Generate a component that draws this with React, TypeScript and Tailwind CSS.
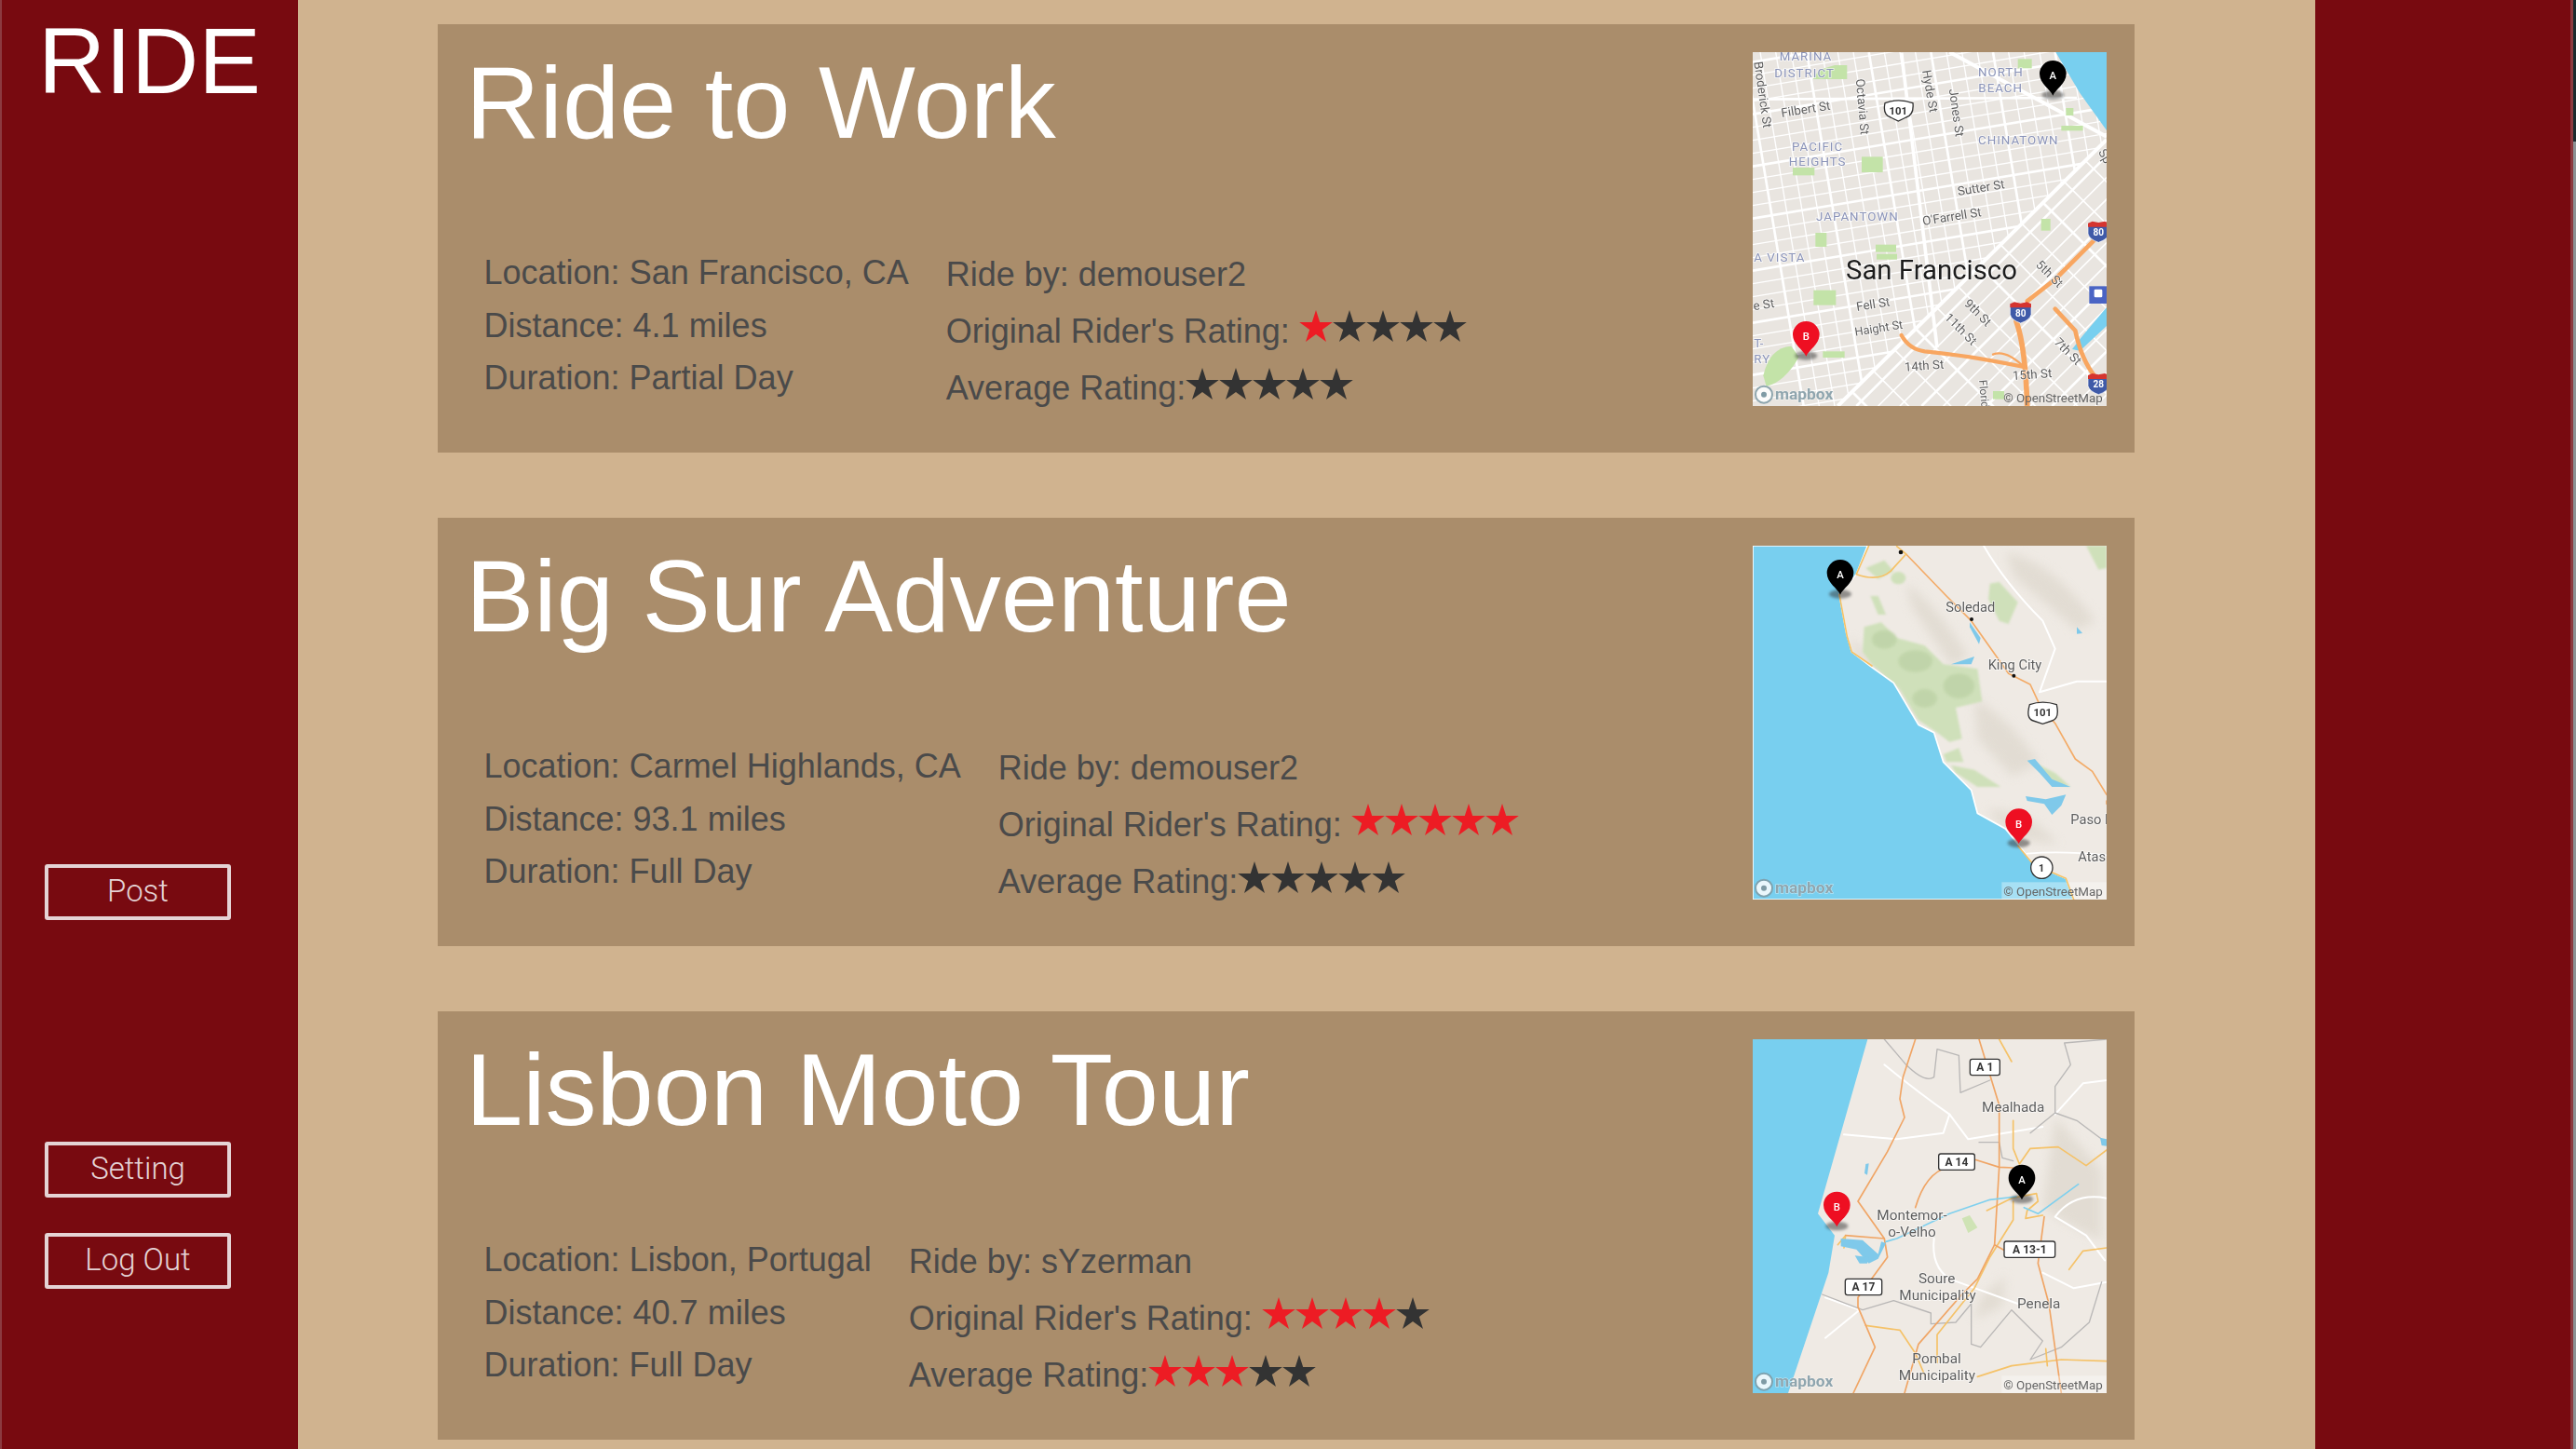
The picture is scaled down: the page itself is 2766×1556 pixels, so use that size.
import React from "react";

const rides = [
  { title: "Ride to Work", location: "San Francisco, CA", distance: "4.1 miles", duration: "Partial Day", by: "demouser2", original: 1, average: 0, map: "sf" },
  { title: "Big Sur Adventure", location: "Carmel Highlands, CA", distance: "93.1 miles", duration: "Full Day", by: "demouser2", original: 5, average: 0, map: "sur" },
  { title: "Lisbon Moto Tour", location: "Lisbon, Portugal", distance: "40.7 miles", duration: "Full Day", by: "sYzerman", original: 4, average: 3, map: "lisbon" },
];

function Stars({ red }: { red: number }) {
  return (
    <span className="flex">
      {[0, 1, 2, 3, 4].map((i) => (
        <svg key={i} viewBox="0 0 36 34" className="h-[34px] w-[36px]">
          <polygon
            points="18,0 22.2,13 35.8,13 24.8,21 29,34 18,26 7,34 11.2,21 0.2,13 13.8,13"
            fill={i < red ? "#ED1C24" : "#333333"}
          />
        </svg>
      ))}
    </span>
  );
}

function Pin({ x, y, label, fill }: { x: number; y: number; label: string; fill: string }) {
  return (
    <g>
      <ellipse cx={x} cy={y - 2} rx="36" ry="14" fill="#333" opacity="0.5" className="blur-[5px]" />
      <path
        d={`M${x} ${y}C${x - 8} ${y - 20} ${x - 43} ${y - 38} ${x - 43} ${y - 70}A43 43 0 1 1 ${x + 43} ${y - 70}C${x + 43} ${y - 38} ${x + 8} ${y - 20} ${x} ${y}Z`}
        fill={fill}
      />
      <text x={x} y={y - 52} textAnchor="middle" fontSize="34" fontWeight="500" fill="#fff">{label}</text>
    </g>
  );
}

function Label({ x, y, size = 40, rotate = 0, fill = "#5d5d5d", spacing = 0, weight = 400, children }: {
  x: number; y: number; size?: number; rotate?: number; fill?: string; spacing?: number; weight?: number; children: string;
}) {
  return (
    <text
      x={x}
      y={y}
      fontSize={size}
      fill={fill}
      fontWeight={weight}
      letterSpacing={spacing}
      stroke="#ffffff"
      strokeOpacity="0.7"
      strokeWidth="5"
      paintOrder="stroke"
      transform={rotate ? `rotate(${rotate} ${x} ${y})` : undefined}
    >
      {children}
    </text>
  );
}

function Shield({ x, y, label, w = 96 }: { x: number; y: number; label: string; w?: number }) {
  return (
    <g>
      <rect x={x - w / 2} y={y - 26} width={w} height={52} rx="7" fill="#fff" stroke="#333" strokeWidth="4" />
      <text x={x} y={y + 13} textAnchor="middle" fontSize="36" fontWeight="700" fill="#333">{label}</text>
    </g>
  );
}

function Interstate({ x, y, label }: { x: number; y: number; label: string }) {
  return (
    <g>
      <path d={`M${x - 34} ${y - 26}H${x + 34}V${y + 8}Q${x + 30} ${y + 26} ${x} ${y + 36}Q${x - 30} ${y + 26} ${x - 34} ${y + 8}Z`} fill="#3f5aa8" stroke="#fff" strokeWidth="2" />
      <path d={`M${x - 34} ${y - 14}V${y - 26}L${x - 20} ${y - 32}L${x} ${y - 28}L${x + 20} ${y - 32}L${x + 34} ${y - 26}V${y - 14}Z`} fill="#d5342f" />
      <text x={x} y={y + 14} textAnchor="middle" fontSize="30" fontWeight="700" fill="#fff">{label}</text>
    </g>
  );
}

function Credits({ box }: { box?: boolean }) {
  return (
    <g>
      {box && <rect x="868" y="1132" width="338" height="56" fill="#ffffff" opacity="0.35" />}
      <circle cx="102" cy="1151" r="27" fill="#ffffff" opacity="0.85" stroke="#7f9ba5" strokeWidth="6" />
      <circle cx="102" cy="1151" r="9" fill="#7f9ba5" />
      <text x="138" y="1166" fontSize="52" fontWeight="700" fill="#8fa5ae" stroke="#ffffff" strokeOpacity="0.6" strokeWidth="3" paintOrder="stroke">mapbox</text>
      <text x="874" y="1176" fontSize="40" fill="#666">© OpenStreetMap</text>
    </g>
  );
}

function SfMap() {
  const across = Array.from({ length: 30 }, (_, i) => 20 + i * 42);
  const down = Array.from({ length: 26 }, (_, i) => 40 + i * 50);
  const northeast = Array.from({ length: 20 }, (_, i) => 400 + i * 70);
  const southeast = Array.from({ length: 14 }, (_, i) => i * 68);
  return (
    <>
      <defs>
        <clipPath id="sf-north"><polygon points="66,48 1206,48 1206,330 340,1188 66,1188" /></clipPath>
        <clipPath id="sf-south"><polygon points="1206,330 1206,1188 340,1188" /></clipPath>
      </defs>
      <rect x="66" y="48" width="1140" height="1140" fill="#e9e5e0" />
      <g clipPath="url(#sf-north)" stroke="#ffffff">
        {across.map((y, i) => <line key={y} x1="66" y1={y + 60} x2="1206" y2={y - 130} strokeWidth={i % 4 === 0 ? 8 : 4} />)}
        {down.map((x, i) => <line key={x} x1={x} y1="48" x2={x + 190} y2="1188" strokeWidth={i % 4 === 0 ? 8 : 4} />)}
      </g>
      <g clipPath="url(#sf-south)" stroke="#ffffff">
        {northeast.map((x, i) => <line key={x} x1={x} y1="1188" x2={x + 800} y2={388} strokeWidth={i % 3 === 0 ? 8 : 5} />)}
        {southeast.map((t, i) => <line key={t} x1={1206 - t} y1={330 + t} x2={1206 - t + 900} y2={330 + t + 900} strokeWidth={i % 3 === 0 ? 8 : 5} />)}
      </g>
      <g stroke="#ffffff" fill="none">
        <path d="M1206 330L340 1188" strokeWidth="12" />
        <path d="M545 50L660 1000" strokeWidth="11" />
        <path d="M66 200L1110 195" strokeWidth="8" />
        <path d="M700 48L1206 320" strokeWidth="12" />
      </g>
      <g fill="#c3e3a8">
        <path d="M330 90h40v45h-110l20-30z" />
        <rect x="417" y="385" width="68" height="50" />
        <path d="M195 420h70v25h-70z" />
        <rect x="268" y="630" width="36" height="45" />
        <rect x="262" y="815" width="72" height="48" />
        <rect x="462" y="668" width="66" height="24" />
        <rect x="465" y="698" width="66" height="18" />
        <rect x="292" y="1012" width="70" height="20" />
        <path d="M100 1090Q120 1000 190 995L215 1030Q170 1110 110 1125Z" />
        <rect x="995" y="585" width="30" height="38" />
        <rect x="1075" y="228" width="24" height="24" />
        <rect x="1060" y="285" width="70" height="16" />
        <rect x="920" y="70" width="45" height="30" />
        <rect x="840" y="1140" width="36" height="26" />
      </g>
      <path d="M1042 48H1206V300L1120 180Z" fill="#78cfef" />
      <path d="M1206 870L1130 960L1095 1005L1120 1010L1206 930Z" fill="#78cfef" />
      <g fill="none" stroke="#f8a660" strokeLinecap="round" strokeLinejoin="round">
        <path d="M545 960Q570 1005 620 1012Q760 1025 940 1062" strokeWidth="13" />
        <path d="M840 1022Q880 1005 940 1062" strokeWidth="7" />
        <path d="M1170 650L1040 780L950 850" strokeWidth="14" />
        <path d="M915 915Q945 1000 950 1188" strokeWidth="17" />
        <path d="M1040 875L1105 945Q1125 1040 1170 1095" strokeWidth="14" />
      </g>
      <rect x="1150" y="802" width="56" height="56" fill="#4a64c4" />
      <rect x="1166" y="812" width="26" height="26" rx="4" fill="#fff" />
      <Label x={136} y={128} fill="#8a93b8" spacing={3}>DISTRICT</Label>
      <Label x={152} y={76} fill="#8a93b8" spacing={3}>MARINA</Label>
      <Label x={792} y={127} fill="#8a93b8" spacing={3}>NORTH</Label>
      <Label x={793} y={177} fill="#8a93b8" spacing={3}>BEACH</Label>
      <Label x={192} y={365} fill="#8a93b8" spacing={3}>PACIFIC</Label>
      <Label x={182} y={415} fill="#8a93b8" spacing={3}>HEIGHTS</Label>
      <Label x={792} y={345} fill="#8a93b8" spacing={3}>CHINATOWN</Label>
      <Label x={270} y={590} fill="#8a93b8" spacing={3}>JAPANTOWN</Label>
      <Label x={70} y={722} fill="#8a93b8" spacing={3}>A VISTA</Label>
      <Label x={70} y={1000} fill="#8a93b8">T-</Label>
      <Label x={70} y={1050} fill="#8a93b8" spacing={3}>RY</Label>
      <Label x={160} y={258} rotate={-9}>Filbert St</Label>
      <Label x={398} y={135} rotate={85}>Octavia St</Label>
      <Label x={612} y={108} rotate={80}>Hyde St</Label>
      <Label x={698} y={168} rotate={82}>Jones St</Label>
      <Label x={70} y={80} rotate={82}>Broderick St</Label>
      <Label x={728} y={510} rotate={-9}>Sutter St</Label>
      <Label x={615} y={606} rotate={-9}>O'Farrell St</Label>
      <Label x={402} y={882} rotate={-9}>Fell St</Label>
      <Label x={397} y={962} rotate={-9} size={38}>Haight St</Label>
      <Label x={70} y={880} rotate={-9}>e St</Label>
      <Label x={556} y={1076} rotate={-4}>14th St</Label>
      <Label x={904} y={1104} rotate={-4}>15th St</Label>
      <Label x={976} y={735} rotate={45}>5th St</Label>
      <Label x={745} y={860} rotate={45}>9th St</Label>
      <Label x={682} y={905} rotate={45}>11th St</Label>
      <Label x={1035} y={985} rotate={45}>7th St</Label>
      <Label x={795} y={1105} rotate={85} size={36}>Florida</Label>
      <Label x={1178} y={370} rotate={60}>Sp</Label>
      <Label x={366} y={780} size={88} fill="#1c1c1c">San Francisco</Label>
      <g>
        <path d="M492 212Q535 195 582 212Q586 250 560 258L535 270L510 258Q484 250 492 212Z" fill="#fff" stroke="#333" strokeWidth="4" />
        <text x="535" y="249" textAnchor="middle" fontSize="34" fontWeight="700" fill="#333">101</text>
      </g>
      <Interstate x={1180} y={625} label="80" />
      <Interstate x={929} y={885} label="80" />
      <Interstate x={1180} y={1115} label="28" />
      <Pin x={1033} y={188} label="A" fill="#000000" />
      <Pin x={238} y={1028} label="B" fill="#ee0f22" />
      <Credits />
    </>
  );
}

function SurMap() {
  return (
    <>
      <rect x="66" y="48" width="1140" height="1140" fill="#efeae4" />
      <g fill="#dfd9cf" className="blur-[16px]" opacity="0.8">
        <path d="M560 170Q640 220 760 400L710 440L580 250Z" />
        <path d="M880 70Q1020 90 1170 290L1110 320L910 150Z" />
        <path d="M820 900Q950 890 1050 1010L900 990Z" />
        <path d="M780 540Q900 610 990 750L900 790L790 670Z" />
        <path d="M380 340L460 420L530 500L600 600L580 620L450 460L390 390Z" />
      </g>
      <g fill="#cfe0ba" className="blur-[3px]">
        <path d="M425 310L480 295L530 345L620 370L680 430L790 445L805 550L720 570L730 620L740 670L700 680L660 650L600 610L540 510L450 430L420 390Z" />
        <path d="M830 170L860 165L920 230L890 300L860 290L825 220Z" />
        <path d="M430 120L490 95L520 130L470 155Z" />
        <ellipse cx="535" cy="152" rx="24" ry="20" />
        <path d="M445 210L470 210L495 270L470 270Z" />
        <path d="M680 720L730 700L745 745L690 745Z" />
        <path d="M705 755L780 770L865 825L790 825L720 780Z" />
        <path d="M1140 48H1206V120L1180 125Z" />
        <path d="M960 740L1040 780L1090 825L1030 815Z" />
      </g>
      <g fill="#b5cc9d" opacity="0.55" className="blur-[5px]">
        <ellipse cx="490" cy="350" rx="40" ry="30" />
        <ellipse cx="590" cy="420" rx="55" ry="35" />
        <ellipse cx="730" cy="500" rx="50" ry="40" />
        <ellipse cx="620" cy="540" rx="40" ry="30" />
      </g>
      <path d="M66 48H436L400 140L345 205L368 330L385 390L450 440L520 490L600 625L650 650L680 745L770 835L790 910L880 960L925 1015L970 1075L1075 1120L1100 1188H66Z" fill="#78cfef" stroke="#ffffff" strokeWidth="5" />
      <rect x="868" y="1132" width="338" height="56" fill="#ffffff" opacity="0.35" />
      <g fill="none" strokeLinecap="round" strokeLinejoin="round">
        <path d="M810 48Q880 170 1000 290L1040 380L990 520L1110 485L1206 485" stroke="#ffffff" strokeWidth="6" />
        <path d="M560 75L690 210L770 290L890 460L960 495L990 560L1040 620L1105 735L1160 775L1206 850" stroke="#f3ab67" strokeWidth="5" />
        <path d="M440 48L400 140Q470 165 510 130L560 75L530 50" stroke="#f5c268" strokeWidth="5" />
        <path d="M345 205L370 340L385 390L450 435" stroke="#f5c268" strokeWidth="5" />
        <path d="M920 1015L970 1075L1075 1120L1100 1188" stroke="#f5c268" strokeWidth="5" />
        <path d="M950 1040Q1060 1030 1206 1045" stroke="#ffffff" strokeWidth="5" />
        <path d="M1206 870V880" stroke="#f3ab67" strokeWidth="5" />
      </g>
      <g fill="#7fc9ea">
        <path d="M950 740L975 735L1030 800L1090 825L1030 825L990 780Z" />
        <path d="M945 855L1010 865L1075 850L1060 885L1030 915L1005 880L950 870Z" />
        <path d="M765 295L800 345L795 365L765 310Z" />
        <path d="M1110 310L1128 330L1110 332Z" />
        <path d="M705 430L780 405L770 430Z" />
      </g>
      <g fill="#111">
        <circle cx="543" cy="69" r="7" />
        <circle cx="771" cy="285" r="6" />
        <circle cx="907" cy="467" r="6" />
      </g>
      <Label x={688} y={262} size={44}>Soledad</Label>
      <Label x={824} y={446} size={44}>King City</Label>
      <Label x={1090} y={946} size={44}>Paso R</Label>
      <Label x={1114} y={1064} size={44}>Atas</Label>
      <g>
        <path d="M958 560Q1000 545 1045 560Q1055 605 1030 612L1000 622L970 612Q945 605 958 560Z" fill="#fff" stroke="#333" strokeWidth="4" />
        <text x="1000" y="598" textAnchor="middle" fontSize="34" fontWeight="700" fill="#333">101</text>
      </g>
      <circle cx="997" cy="1085" r="35" fill="#fff" stroke="#333" strokeWidth="4" />
      <text x="996" y="1097" textAnchor="middle" fontSize="32" fontWeight="700" fill="#333">1</text>
      <Pin x={348} y={206} label="A" fill="#000000" />
      <Pin x={923} y={1008} label="B" fill="#ee0f22" />
      <Credits />
    </>
  );
}

function LisbonMap() {
  return (
    <>
      <rect x="66" y="48" width="1140" height="1140" fill="#efeae4" />
      <g fill="#dfd9cf" className="blur-[16px]" opacity="0.8">
        <path d="M1040 300Q1130 400 1190 470V700L1060 630L1000 590Z" />
        <path d="M800 880L880 810L870 910L780 950Z" />
      </g>
      <path d="M740 625L765 615L790 655L760 672Z" fill="#cfe3b5" />
      <path d="M66 48H436L276 610L330 680L310 800L180 1188H66Z" fill="#78cfef" />
      <g fill="none" strokeLinecap="round" strokeLinejoin="round">
        <g stroke="#ffffff" strokeWidth="6">
          <path d="M490 130Q600 220 700 290L760 370L1000 330" />
          <path d="M700 290L680 350L530 370L360 355" />
          <path d="M1206 560Q1100 540 1040 620L1140 680L1200 760" />
          <path d="M650 690Q640 780 700 820L920 900" />
          <path d="M300 880L410 920L300 1010" />
          <path d="M1040 290L1130 190L1206 180" />
          <path d="M1000 800L1100 850L1206 830" />
        </g>
        <g stroke="#b9b7b6" strokeWidth="4">
          <path d="M490 48L560 130Q620 190 650 170L660 80L730 100L735 220L830 180" />
          <path d="M795 380H860L870 430L905 440" />
          <path d="M960 350L1040 285L1110 310L1190 370" />
          <path d="M1040 285L1040 200L1090 130L1070 60L1206 48" />
          <path d="M290 870L420 920L520 890L640 930L640 965L720 960L770 900L770 1030L800 1040L900 920L1000 1020L960 1080L1060 1040L1150 960L1190 830" />
        </g>
        <g stroke="#f5c268" strokeWidth="5">
          <path d="M860 48L900 120" />
          <path d="M905 310V400L925 450L960 400L1050 395L1140 455L1206 405" />
          <path d="M905 570L905 630L830 750L780 850L660 1000V1090" />
          <path d="M820 600L900 560L980 545L985 570L950 600L945 625L1000 615" />
          <path d="M340 710L365 680L360 720" />
          <path d="M430 970L540 985L590 1060L620 1130" />
          <path d="M1085 790L1130 730L1206 720" />
          <path d="M790 1135L900 1100L1060 1080L1206 1085" />
          <path d="M1010 1045L1015 1100" />
        </g>
        <g stroke="#f0a565" strokeWidth="5">
          <path d="M590 48L550 170L540 240L555 300L500 410L405 570L490 690L500 750L405 880V910L460 1040L390 1188" />
          <path d="M365 680L490 690" />
          <path d="M590 590Q620 490 680 465" />
          <path d="M780 435L860 460L905 462" />
          <path d="M795 48L860 260L860 460L845 710L790 820L740 870L600 1030L555 1188" />
          <path d="M845 710L880 730" />
          <path d="M1005 620L985 770L1020 900L1060 1188" />
        </g>
        <g stroke="#7fd0ee" strokeWidth="5">
          <path d="M1115 515L985 610L940 590" />
          <path d="M915 555L830 565L700 610L530 690L495 700" />
        </g>
      </g>
      <g fill="#7fc9ea">
        <path d="M350 690L420 695L470 740L480 700L495 705L470 755L440 770L400 725L350 715Z" />
        <path d="M395 745L440 750L435 770L410 770Z" />
        <path d="M430 450L440 448L435 485L426 480Z" />
        <path d="M1185 365L1206 370V392L1190 390Z" />
      </g>
      <Label x={804} y={282} size={46}>Mealhada</Label>
      <Label x={466} y={630} size={46}>Montemor-</Label>
      <Label x={502} y={685} size={46}>o-Velho</Label>
      <Label x={600} y={834} size={46}>Soure</Label>
      <Label x={538} y={888} size={46}>Municipality</Label>
      <Label x={918} y={915} size={46}>Penela</Label>
      <Label x={580} y={1093} size={46}>Pombal</Label>
      <Label x={536} y={1147} size={46}>Municipality</Label>
      <Shield x={814} y={138} label="A 1" />
      <Shield x={723} y={443} label="A 14" w={116} />
      <Shield x={958} y={725} label="A 13-1" w={164} />
      <Shield x={423} y={846} label="A 17" w={118} />
      <Pin x={933} y={565} label="A" fill="#000000" />
      <Pin x={337} y={652} label="B" fill="#ee0f22" />
      <Credits box />
    </>
  );
}

function RideMap({ name }: { name: string }) {
  return (
    <div className="h-[380px] w-[380px] shrink-0 overflow-hidden">
      <svg viewBox="66 48 1140 1140" className="h-[380px] w-[380px] blur-[0.5px] font-['Roboto',sans-serif]">
        {name === "sf" && <SfMap />}
        {name === "sur" && <SurMap />}
        {name === "lisbon" && <LisbonMap />}
      </svg>
    </div>
  );
}

function NavButton({ children, className }: { children: string; className: string }) {
  return (
    <button className={`h-[60px] w-[200px] rounded-[3px] border-4 border-[#e5d3d5] pb-[2px] text-[33px] font-light text-[#e5d3d5] font-['Roboto',sans-serif] ${className}`}>
      {children}
    </button>
  );
}

export default function App() {
  return (
    <div className="flex h-[1556px] w-[2766px] overflow-hidden bg-[#d0b38f] font-['Liberation_Sans',Arial,sans-serif]">
      <div className="w-[2px] shrink-0 bg-[#8c3a40]" />
      <aside className="flex w-[318px] shrink-0 flex-col bg-[#780a10] pl-[46px]">
        <h1 className="-ml-[7px] h-[130px] text-[100px] leading-[130px] text-white">RIDE</h1>
        <NavButton className="mt-[798px]">Post</NavButton>
        <NavButton className="mt-[238px]">Setting</NavButton>
        <NavButton className="mt-[38px]">Log Out</NavButton>
      </aside>

      <main className="flex flex-1 flex-col gap-[70px] px-[150px] pt-[26px] pr-[194px]">
        {rides.map((ride) => (
          <section key={ride.title} className="flex h-[460px] shrink-0 justify-between bg-[#aa8d6b] pt-[30px] pr-[30px] pl-[30px]">
            <div className="-mt-[8px]">
              <h2 className="h-[124px] text-[110px] leading-[124px] text-white">{ride.title}</h2>
              <div className="mt-[94px] ml-[19.5px] flex gap-[40px] text-[36px] text-[#4a4a4a]">
                <div className="-mt-[1px] leading-[56.5px]">
                  <p>Location: {ride.location}</p>
                  <p>Distance: {ride.distance}</p>
                  <p>Duration: {ride.duration}</p>
                </div>
                <div className="-mt-[2px] leading-[61px]">
                  <p>Ride by: {ride.by}</p>
                  <div className="flex items-center">
                    <span className="whitespace-pre">Original Rider's Rating: </span>
                    <span className="mb-[12px]"><Stars red={ride.original} /></span>
                  </div>
                  <div className="flex items-center">
                    <span>Average Rating:</span>
                    <span className="mb-[10px]"><Stars red={ride.average} /></span>
                  </div>
                </div>
              </div>
            </div>
            <RideMap name={ride.map} />
          </section>
        ))}
      </main>

      <aside className="w-[274px] shrink-0 bg-[#780a10]" />
      <div className="w-[3px] shrink-0 bg-[#8c3a40]" />
      <div className="flex w-[3px] shrink-0 flex-col bg-[#8c9194]">
        <div className="h-[152px] bg-[#1c2a2e]" />
      </div>
    </div>
  );
}
